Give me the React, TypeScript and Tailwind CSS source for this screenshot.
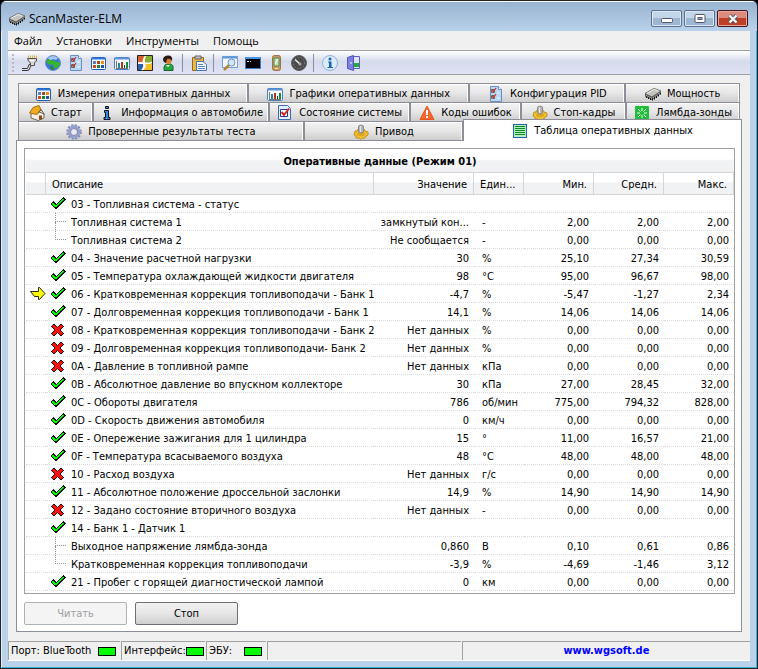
import React, { useState } from 'react';

type Row = {
  status?: 'ok' | 'error';
  child?: 'middle' | 'last';
  name: string;
  values?: [string, string, string, string, string];
};

const rows: Row[] = [
  { status: 'ok', name: '03 - Топливная система - статус' },
  { child: 'middle', name: 'Топливная система 1', values: ['замкнутый кон...', '-', '2,00', '2,00', '2,00'] },
  { child: 'last', name: 'Топливная система 2', values: ['Не сообщается', '-', '0,00', '0,00', '0,00'] },
  { status: 'ok', name: '04 - Значение расчетной нагрузки', values: ['30', '%', '25,10', '27,34', '30,59'] },
  { status: 'ok', name: '05 - Температура охлаждающей жидкости двигателя', values: ['98', '°C', '95,00', '96,67', '98,00'] },
  { status: 'ok', name: '06 - Кратковременная коррекция топливоподачи - Банк 1', values: ['-4,7', '%', '-5,47', '-1,27', '2,34'] },
  { status: 'ok', name: '07 - Долговременная коррекция топливоподачи - Банк 1', values: ['14,1', '%', '14,06', '14,06', '14,06'] },
  { status: 'error', name: '08 - Кратковременная коррекция топливоподачи - Банк 2', values: ['Нет данных', '%', '0,00', '0,00', '0,00'] },
  { status: 'error', name: '09 - Долговременная коррекция топливоподачи- Банк 2', values: ['Нет данных', '%', '0,00', '0,00', '0,00'] },
  { status: 'error', name: '0A - Давление в топливной рампе', values: ['Нет данных', 'кПа', '0,00', '0,00', '0,00'] },
  { status: 'ok', name: '0B - Абсолютное давление во впускном коллекторе', values: ['30', 'кПа', '27,00', '28,45', '32,00'] },
  { status: 'ok', name: '0C - Обороты двигателя', values: ['786', 'об/мин', '775,00', '794,32', '828,00'] },
  { status: 'ok', name: '0D - Скорость движения автомобиля', values: ['0', 'км/ч', '0,00', '0,00', '0,00'] },
  { status: 'ok', name: '0E - Опережение зажигания для 1 цилиндра', values: ['15', '°', '11,00', '16,57', '21,00'] },
  { status: 'ok', name: '0F - Температура всасываемого воздуха', values: ['48', '°C', '48,00', '48,00', '48,00'] },
  { status: 'error', name: '10 - Расход воздуха', values: ['Нет данных', 'г/с', '0,00', '0,00', '0,00'] },
  { status: 'ok', name: '11 - Абсолютное положение дроссельной заслонки', values: ['14,9', '%', '14,90', '14,90', '14,90'] },
  { status: 'error', name: '12 - Задано состояние вторичного воздуха', values: ['Нет данных', '-', '0,00', '0,00', '0,00'] },
  { status: 'ok', name: '14 - Банк 1 - Датчик 1' },
  { child: 'middle', name: 'Выходное напряжение лямбда-зонда', values: ['0,860', 'В', '0,10', '0,61', '0,86'] },
  { child: 'last', name: 'Кратковременная коррекция топливоподачи', values: ['-3,9', '%', '-4,69', '-1,46', '3,12'] },
  { status: 'ok', name: '21 - Пробег с горящей диагностической лампой', values: ['0', 'км', '0,00', '0,00', '0,00'] },
];

const Svg: React.FC<{ children: React.ReactNode }> = ({ children }) => (
  <svg viewBox="0 0 16 16" className="w-4 h-4 shrink-0" aria-hidden="true">
    {children}
  </svg>
);

const ChipIcon = () => (
  <Svg>
    <path d="M0 7L9 2L16 4.500V7.500L7 14L0 10.500Z" fill="#5a5a58" />
    <path d="M1.500 10v2M3.500 11v2M5.500 12v2M7.500 12v2.500M9.500 11v2.500M11.500 9.500v2.500M13.500 8v2.500M15.500 6.500v2" stroke="#111" />
    <path d="M0.500 7.500L9 2.500L15.500 5L7 10.500Z" fill="#c3c4be" />
    <path d="M2 7.500L9 3.500L13 5" stroke="#ecece8" fill="none" />
    <path d="M1 9.500L7 12.500L15.500 6.500" stroke="#d2d2cc" fill="none" strokeDasharray="1 1" />
  </Svg>
);

const PlugIcon = () => (
  <Svg>
    <path d="M0 14.500H5C8 14.500 6 10 9.500 9.500" stroke="#333" strokeWidth="2.800" fill="none" />
    <path d="M0 14.500H5C8 14.500 6 10 9.500 9.500" stroke="#e4e4e4" strokeWidth="1.200" fill="none" />
    <path d="M5.500 3.500H14.500V6L12.500 7.500V10.500H8.500V8L6.500 6Z" fill="#d9d9d4" stroke="#555" />
    <path d="M8 5.500H12" stroke="#fff" />
    <path d="M6.500 3V0.500M8.500 3V0.500M10.500 3V0.500M12.500 3V0.500M14.500 3V0.500" stroke="#d0b645" />
  </Svg>
);

const GlobeIcon = () => (
  <Svg>
    <circle cx="8" cy="8" r="7.500" fill="#3d74d6" stroke="#6c8fc6" />
    <path d="M3 3Q8 -1 13 3L11 5L8 4L5 6Z" fill="#a8c8f4" />
    <path d="M1 6L4 4L7 6L9 5L11 7L15 7L14 11L11 14L9 12L8 9L5 10L3 9Z" fill="#35b729" />
    <path d="M5 11L8 12L9 15L6 14Z" fill="#228c1c" />
  </Svg>
);

const ChecklistIcon = () => (
  <Svg>
    <path d="M2.500 0.500H10.500L13.500 3.500V15.500H2.500Z" fill="#bcd6f5" stroke="#6d8fc0" />
    <path d="M10.500 0.500V3.500H13.500" fill="#fff" stroke="#6d8fc0" />
    <path d="M3.500 3.500H6.500V6.500H3.500ZM3.500 9.500H6.500V12.500H3.500Z" fill="#ddd" stroke="#666" />
    <path d="M4 4L5.500 5.500L8 2M4 10L5.500 11.500L8 8" stroke="#c8321c" strokeWidth="1.200" fill="none" />
    <path d="M9 7H12M9 12H12" stroke="#f3f8ff" />
  </Svg>
);

const GridIcon = () => (
  <Svg>
    <rect x="0.500" y="2.500" width="14" height="12" rx="1" fill="#fff" stroke="#1d5bb8" />
    <path d="M1 3.500H14" stroke="#2f77d8" strokeWidth="2" />
    <path d="M2 6h3v3H2z" fill="#5b7fc4" />
    <path d="M6 6h3v3H6z" fill="#a04a25" />
    <path d="M10 6h3v3h-3z" fill="#f08c16" />
    <path d="M2 10h3v3H2z" fill="#d14624" />
    <path d="M6 10h3v3H6z" fill="#148c26" />
    <path d="M10 10h3v3h-3z" fill="#2450b2" />
  </Svg>
);

const ChartIcon = () => (
  <Svg>
    <rect x="0.500" y="2.500" width="15" height="12" rx="1" fill="#f6f9fd" stroke="#4a7fc1" />
    <path d="M1 3.500H15" stroke="#5d92d8" strokeWidth="2" />
    <path d="M2.500 6V13.500M2 13.500H14" stroke="#777" />
    <path d="M4 8h2v5H4z" fill="#1b8aa0" />
    <path d="M7 7h2v6H7z" fill="#b53416" />
    <path d="M10 10h1v3h-1z" fill="#333" />
    <path d="M12 7h2v6h-2z" fill="#158a35" />
  </Svg>
);

const WindowsIcon = () => (
  <Svg>
    <path d="M0.500 0.500H15.500V15.500H0.500Z" fill="#fff" stroke="#222" />
    <path d="M1 1H8Q5 4 6 8L1 7Z" fill="#d9612b" />
    <path d="M9 1H15V7L8 8Q7 4 9 1Z" fill="#83ad2c" />
    <path d="M1 9L6 9Q7 12 4 15H1Z" fill="#2f5fae" />
    <path d="M8 9L15 8V15H6Q9 12 8 9Z" fill="#f0be24" />
    <path d="M1 8.500Q6 6 9 8T15 7M8.500 1Q5 5 7.500 9T5 15" stroke="#fff" fill="none" />
  </Svg>
);

const UserIcon = () => (
  <Svg>
    <path d="M4 15.500V12Q5 8.500 8 9Q13 8.500 13 12V15.500Z" fill="#28a83c" stroke="#13661f" />
    <path d="M6 10L8 12L10 10" fill="#fff" />
    <circle cx="8.500" cy="6" r="3" fill="#d98236" />
    <path d="M3 4Q4 0 9 0.500Q13 1 12 6Q10 3 7 4L6 8Q3 7 3 4Z" fill="#2c1a14" />
  </Svg>
);

const PasteIcon = () => (
  <Svg>
    <path d="M1.500 2.500H12.500V15.500H1.500Z" fill="#e8b64c" stroke="#9a6a1b" />
    <path d="M4 1H10V4H4Z" fill="#b8bcc4" stroke="#666" />
    <path d="M5.500 6.500H12L15.500 9.500V15.500H5.500Z" fill="#eef5fd" stroke="#4674b0" />
    <path d="M7 9.500H12M7 11.500H14M7 13.500H14" stroke="#5e86be" />
  </Svg>
);

const SearchIcon = () => (
  <Svg>
    <rect x="0.500" y="1.500" width="15" height="11" fill="#f4f8fd" stroke="#76a0d3" />
    <path d="M1 2.500H15" stroke="#5b98df" strokeWidth="2" />
    <path d="M7 10L2 15" stroke="#b98734" strokeWidth="2.500" />
    <circle cx="9.500" cy="7.500" r="3.500" fill="#cfe9fa" stroke="#7793b0" />
  </Svg>
);

const ConsoleIcon = () => (
  <Svg>
    <path d="M0.500 2.500H15.500V13.500H0.500Z" fill="#050505" stroke="#377cc8" />
    <path d="M1 3H15" stroke="#4a94e4" strokeWidth="2" />
    <path d="M2 6.500H4M5 6.500H6" stroke="#ddd" fill="none" />
  </Svg>
);

const DeviceIcon = () => (
  <Svg>
    <rect x="4.500" y="0.500" width="8" height="15" rx="2" fill="#c99b5b" stroke="#9c7440" />
    <path d="M6 3H11V11H6Z" fill="#bfe2b4" stroke="#4d8a5a" />
    <path d="M7 9L10 4" stroke="#fff" />
    <path d="M7 13.500H10" stroke="#f3dfb8" />
  </Svg>
);

const GaugeIcon = () => (
  <Svg>
    <circle cx="8" cy="8" r="7.500" fill="#4a4a4a" stroke="#5c5c5c" />
    <circle cx="8" cy="8" r="5.500" fill="none" stroke="#8a8a8a" strokeDasharray="1 2" />
    <path d="M4 4.500L9 9" stroke="#eee" strokeWidth="1.500" />
    <circle cx="9" cy="9" r="1.500" fill="#aaa" />
  </Svg>
);

const InfoIcon = () => (
  <Svg>
    <circle cx="8" cy="8" r="7.500" fill="#dcebf9" stroke="#8fb0d6" />
    <circle cx="8" cy="4" r="1.500" fill="#1462b0" />
    <path d="M6 6.500H9.500V12H11V13H5.500V12H7V7.500H6Z" fill="#1462b0" />
  </Svg>
);

const ExitIcon = () => (
  <Svg>
    <path d="M7 1.500H14.500V13.500H7Z" fill="#dfe3fb" stroke="#5b5fc4" />
    <path d="M2.500 2.500L8.500 0.500V15.500L2.500 13.500Z" fill="#7b7fe0" stroke="#5357b5" />
    <path d="M9 8h5v4H9z" fill="#23a83a" />
    <path d="M6 7v2" stroke="#fff" />
  </Svg>
);

const HomeIcon = () => (
  <Svg>
    <path d="M2 9L8 6L15 9V13L9 15.500L2 13Z" fill="#f4efe2" stroke="#746955" />
    <path d="M10 10.500H13V14.500H10Z" fill="#8b4a1c" />
    <path d="M0.500 8L4 2.500L10 0.500L12 5L8 9.500Z" fill="#efab20" stroke="#a96d0d" />
    <path d="M8.500 8.500L12 4.500L15.500 9.500" stroke="#66563c" fill="none" />
  </Svg>
);

const LetterInfoIcon = () => (
  <Svg>
    <path d="M6.500 1.500H9.500V3.500H6.500Z" fill="#2c8bea" stroke="#111" />
    <path d="M5.500 5.500H9.500V12.500H11V14.500H5V12.500H6.500V7.500H5.500Z" fill="#2c8bea" stroke="#111" />
  </Svg>
);

const StateIcon = () => (
  <Svg>
    <path d="M1.500 0.500H10.500L13.500 3.500V14.500H1.500Z" fill="#e6f0fc" stroke="#3f6bb0" />
    <path d="M3.500 4.500H10.500V11.500H3.500Z" fill="#fff" stroke="#253a8a" />
    <path d="M4.500 7L7 10L12 3.500" stroke="#e02418" strokeWidth="2" fill="none" />
  </Svg>
);

const WarningIcon = () => (
  <Svg>
    <path d="M8 1L15 14.500H1Z" fill="#f4662a" stroke="#e4571f" strokeLinejoin="round" />
    <path d="M7 5H9V10H7ZM7 11H9V13H7Z" fill="#fff" />
  </Svg>
);

const ActuatorIcon = () => (
  <Svg>
    <path d="M2 7L4 7L5 5H11L12 7L15 8V11L13 12L12 14L9 14.500L8 15.500L6 14H3L3 12L1 11Z" fill="#efc132" stroke="#c0901d" />
    <ellipse cx="8" cy="10" rx="4" ry="2" fill="#dca61f" />
    <path d="M5.500 2Q8 0 10.500 2V8Q8 10 5.500 8Z" fill="#b5b5b5" stroke="#8c8c8c" />
    <path d="M7.500 2V8" stroke="#e8e8e8" />
  </Svg>
);

const LambdaIcon = () => (
  <Svg>
    <rect x="1" y="1" width="14" height="14" rx="1" fill="#23bd3c" />
    <path d="M8 3V6M8 10V13M3 8H6M10 8H13M4 4L6.500 6.500M12 4L9.500 6.500M4 12L6.500 9.500M12 12L9.500 9.500" stroke="#e6ffe9" />
  </Svg>
);

const GearIcon = () => (
  <Svg>
    <circle cx="8" cy="8" r="6.500" fill="none" stroke="#8088b4" strokeWidth="2.500" strokeDasharray="2 1.400" />
    <circle cx="8" cy="8" r="5" fill="none" stroke="#969ecb" strokeWidth="3" />
    <circle cx="8" cy="8" r="3.500" fill="#ececf0" stroke="#7a84ae" />
  </Svg>
);

const TableIcon = () => (
  <Svg>
    <rect x="1.500" y="1.500" width="13" height="13" fill="#b4efc0" stroke="#2263b5" />
    <path d="M3 3.500H13M3 5.500H13M3 7.500H13M3 9.500H13M3 11.500H13" stroke="#0a8a24" />
  </Svg>
);

const CheckIcon = () => (
  <Svg>
    <g shapeRendering="crispEdges">
      <path d="M0 8L3 5L6 8L13 1L15.500 3.500L6 13Z" fill="#111" />
      <path d="M1.500 8L3 6.500L6 9.500L13 2.500L14 3.500L6 11.800Z" fill="#00ff00" />
    </g>
  </Svg>
);

const CrossIcon = () => (
  <Svg>
    <g shapeRendering="crispEdges" fill="none">
      <path d="M2.500 3L12.500 13M12.500 3L2.500 13" stroke="#200808" strokeWidth="4" />
      <path d="M3 3.500L12 12.500M12 3.500L3 12.500" stroke="#ff1010" strokeWidth="2.200" />
    </g>
  </Svg>
);

const ArrowIcon = () => (
  <Svg>
    <path d="M0.500 5.500H8.500V1.500H9.500L15 7.500L9.500 13.500H8.500V10.500H4.500Z" fill="#ffff00" stroke="#222" />
  </Svg>
);

const toolGroups = [
  [
    { label: 'Подключение', Icon: PlugIcon },
    { label: 'Интернет', Icon: GlobeIcon },
    { label: 'Конфигурация PID', Icon: ChecklistIcon },
    { label: 'Измерения', Icon: GridIcon },
    { label: 'Графики', Icon: ChartIcon },
    { label: 'Windows', Icon: WindowsIcon },
    { label: 'Пользователь', Icon: UserIcon },
  ],
  [{ label: 'Буфер обмена', Icon: PasteIcon }],
  [
    { label: 'Поиск', Icon: SearchIcon },
    { label: 'Терминал', Icon: ConsoleIcon },
    { label: 'Устройство', Icon: DeviceIcon },
    { label: 'Приборы', Icon: GaugeIcon },
  ],
  [
    { label: 'О программе', Icon: InfoIcon },
    { label: 'Выход', Icon: ExitIcon },
  ],
];

const tabRows = [
  [
    { label: 'Измерения оперативных данных', Icon: GridIcon, size: 'flex-[231]' },
    { label: 'Графики оперативных данных', Icon: ChartIcon, size: 'flex-[222]' },
    { label: 'Конфигурация PID', Icon: ChecklistIcon, size: 'flex-[156]' },
    { label: 'Мощность', Icon: ChipIcon, size: 'flex-[114]' },
  ],
  [
    { label: 'Старт', Icon: HomeIcon, size: 'flex-[74]' },
    { label: 'Информация о автомобиле', Icon: LetterInfoIcon, size: 'flex-[178]' },
    { label: 'Состояние системы', Icon: StateIcon, size: 'flex-[141]' },
    { label: 'Коды ошибок', Icon: WarningIcon, size: 'flex-[111]' },
    { label: 'Стоп-кадры', Icon: ActuatorIcon, size: 'flex-[105]' },
    { label: 'Лямбда-зонды', Icon: LambdaIcon, size: 'flex-[114]' },
  ],
  [
    { label: 'Проверенные результаты теста', Icon: GearIcon, size: 'flex-[287]' },
    { label: 'Привод', Icon: ActuatorIcon, size: 'flex-[159]' },
  ],
];

const columns = [
  { label: '', cell: 'w-5' },
  { label: 'Описание', cell: 'pl-1.5 text-left' },
  { label: 'Значение', cell: 'w-[100px] pr-1.5 text-right' },
  { label: 'Един...', cell: 'w-[50px] pl-1.5 text-left' },
  { label: 'Мин.', cell: 'w-[70px] pr-1.5 text-right' },
  { label: 'Средн.', cell: 'w-[70px] pr-1.5 text-right' },
  { label: 'Макс.', cell: 'w-[70px] pr-1.5 text-right' },
];

const Led = () => <span className="w-[18px] h-[9px] shrink-0 bg-[#00ff00] border border-black" />;

const TitleBar = () => (
  <header className="h-[30px] flex items-center pt-1 pl-2 pr-[9px] bg-linear-to-b from-[#99b4d1] to-[#b9d1ea] border-t border-white">
    <ChipIcon />
    <h1 className="ml-1 grow font-['Open_Sans','Noto_Sans',sans-serif] text-xs">ScanMaster-ELM</h1>
    <div className="flex gap-0.5">
      <button
        aria-label="Свернуть"
        className="w-[31px] h-[17px] flex items-center justify-center rounded-xs border border-[#5c6f8c] ring-1 ring-inset ring-[#dbe7f3] bg-linear-to-b from-[#c3d5e9] from-50% to-[#9db7d3] to-50%"
      >
        <svg viewBox="0 0 12 6" className="w-3 h-1.5 mt-1" aria-hidden="true">
          <rect x="0.500" y="0.500" width="11" height="4" rx="1" fill="#fff" stroke="#535666" />
        </svg>
      </button>
      <button
        aria-label="Развернуть"
        className="w-[31px] h-[17px] flex items-center justify-center rounded-xs border border-[#5c6f8c] ring-1 ring-inset ring-[#dbe7f3] bg-linear-to-b from-[#c3d5e9] from-50% to-[#9db7d3] to-50%"
      >
        <svg viewBox="0 0 12 10" className="w-3 h-2.5" aria-hidden="true">
          <rect x="1" y="0.500" width="10" height="8" rx="1" fill="#fff" stroke="#535666" />
          <rect x="4" y="3.500" width="4" height="2" fill="#8aa9c9" stroke="#535666" />
        </svg>
      </button>
      <button
        aria-label="Закрыть"
        className="w-[31px] h-[17px] flex items-center justify-center rounded-xs border border-[#431422] ring-1 ring-inset ring-[#e8a99c] bg-linear-to-b from-[#dc8c7c] from-50% to-[#bd3f25] to-50%"
      >
        <svg viewBox="0 0 12 10" className="w-3 h-2.5" aria-hidden="true">
          <path d="M2.500 1.500L9.500 8.500M9.500 1.500L2.500 8.500" stroke="#535666" strokeWidth="4" />
          <path d="M2.500 1.500L9.500 8.500M9.500 1.500L2.500 8.500" stroke="#fff" strokeWidth="2.200" />
        </svg>
      </button>
    </div>
  </header>
);

const Toolbar = () => (
  <div
    role="toolbar"
    className="h-[25px] flex items-center pl-1 border-y border-[#a0a0a0] bg-linear-to-b from-white via-[#d6dbec] via-45% to-[#dfe2f4]"
  >
    <span className="w-0.5 h-[18px] mr-1 border-l-2 border-dotted border-[#b5b9c8]" />
    {toolGroups.map((group, i) => (
      <div key={i} className="flex items-center">
        {i > 0 && <span className="w-px h-[18px] ml-[3px] mr-1 bg-[#8e8f9c]" />}
        {group.map(({ label, Icon }) => (
          <button key={label} aria-label={label} className="w-[23px] h-[22px] flex items-center justify-center">
            <Icon />
          </button>
        ))}
      </div>
    ))}
  </div>
);

export default function App() {
  const [running, setRunning] = useState(true);
  const currentRow = 5;

  return (
    <div className="min-h-screen bg-black font-['DejaVu_Sans_Condensed','Noto_Sans',sans-serif] text-[11px] leading-[14px] text-black">
      <div className="min-h-screen flex flex-col rounded-t-md overflow-hidden border border-[#1f2329]">
        <TitleBar />
        <div className="grow flex flex-col bg-[#bad1ea] border border-t-0 border-[#35b6d6] border-l-[#e4eef8] px-1.5 pb-1.5">
          <div className="grow flex flex-col bg-[#f0f0f0]">
            <nav className="h-[19px] flex items-center gap-3.5 pl-1.5 font-['Open_Sans','Noto_Sans',sans-serif]">
              <button>Файл</button>
              <button>Установки</button>
              <button>Инструменты</button>
              <button>Помощь</button>
            </nav>
            <Toolbar />

            <main className="grow flex flex-col px-2 pt-2">
              <div role="tablist" className="px-0.5">
                {tabRows.map((tabs, i) => (
                  <div key={i} className="flex">
                    {tabs.map(({ label, Icon, size }) => (
                      <button
                        key={label}
                        role="tab"
                        aria-selected={false}
                        className={`${size} min-w-0 h-[19px] pt-0.5 flex items-center justify-center gap-1.5 whitespace-nowrap overflow-hidden border border-b-0 border-[#8c8e98] shadow-[inset_-1px_1px_0_#ffffff] bg-linear-to-b from-[#f3f3f3] via-[#e6e6e6] via-50% to-[#cdcdcd]`}
                      >
                        <Icon />
                        {label}
                      </button>
                    ))}
                    {i === 2 && (
                      <button
                        role="tab"
                        aria-selected
                        className="flex-[280] min-w-0 relative z-10 h-[22px] -mt-0.5 -mb-px -mr-0.5 flex items-center justify-center gap-1.5 whitespace-nowrap bg-white border border-b-0 border-[#8c8e98]"
                      >
                        <TableIcon />
                        {'Таблица оперативных данных'}
                      </button>
                    )}
                  </div>
                ))}
              </div>

              <section className="grow bg-white border border-[#8c8e98] pl-[7px] pr-1.5 pt-[7px] pb-1.5">
                <div className="border border-[#a0a0a0] pt-px pl-px pb-0.5">
                  <h2 className="h-[23px] flex items-center justify-center pt-0.5 font-bold border-b border-[#d5d5d5] bg-linear-to-b from-white from-40% to-[#f1f2f4] to-50%">
                    Оперативные данные (Режим 01)
                  </h2>
                  <table className="w-full table-fixed border-separate border-spacing-0">
                    <thead>
                      <tr>
                        {columns.map((col, i) => (
                          <th
                            key={i}
                            scope="col"
                            className={`${col.cell} h-[22px] pt-0.5 pb-0 font-normal whitespace-nowrap border-b border-r border-[#d5d5d5] bg-linear-to-b from-white from-40% to-[#f1f2f4] to-50%`}
                          >
                            {col.label}
                          </th>
                        ))}
                      </tr>
                    </thead>
                    <tbody className="[&_td]:h-[18px] [&_td]:p-0 [&_td]:whitespace-nowrap [&_td]:border-b [&_td]:border-dotted [&_td]:border-[#dcdcdc]">
                      {rows.map((row, i) => (
                        <tr key={i}>
                          <td>
                            {i === currentRow && (
                              <div className="flex justify-end">
                                <ArrowIcon />
                              </div>
                            )}
                          </td>
                          <td>
                            <div className="h-[17px] flex items-center gap-[5px] pl-1">
                              {row.status === 'ok' && <CheckIcon />}
                              {row.status === 'error' && <CrossIcon />}
                              {row.child && (
                                <span className="w-4 self-stretch pl-[5px] flex flex-col">
                                  <span className="h-[9px] border-l border-b border-dotted border-[#909090]" />
                                  {row.child === 'middle' && (
                                    <span className="grow border-l border-dotted border-[#909090]" />
                                  )}
                                </span>
                              )}
                              <span className="pt-0.5">{row.name}</span>
                            </div>
                          </td>
                          {(row.values || ['', '', '', '', '']).map((value, j) => (
                            <td key={j}>
                              <div className={j === 1 ? 'pt-0.5 pl-2' : 'pt-0.5 pr-[5px] text-right'}>{value}</div>
                            </td>
                          ))}
                        </tr>
                      ))}
                    </tbody>
                  </table>
                </div>
                <div className="flex gap-2 pt-2">
                  <button
                    disabled={running}
                    onClick={() => setRunning(true)}
                    className="w-[103px] h-[23px] rounded-xs border border-[#707070] bg-linear-to-b from-[#f2f2f2] via-[#e6e6e6] via-50% to-[#cfcfcf] disabled:border-[#adb2b5] disabled:bg-none disabled:bg-[#f4f4f4] disabled:text-[#a0a0a0]"
                  >
                    Читать
                  </button>
                  <button
                    disabled={!running}
                    onClick={() => setRunning(false)}
                    className="w-[103px] h-[23px] rounded-xs border border-[#707070] bg-linear-to-b from-[#f2f2f2] via-[#e6e6e6] via-50% to-[#cfcfcf] disabled:border-[#adb2b5] disabled:bg-none disabled:bg-[#f4f4f4] disabled:text-[#a0a0a0]"
                  >
                    Стоп
                  </button>
                </div>
              </section>
            </main>

            <footer className="mt-[9px] h-5 flex gap-px border-b border-white [&>div]:h-[19px] [&>div]:flex [&>div]:items-center [&>div]:whitespace-nowrap [&>div]:border-t [&>div]:border-l [&>div]:border-[#a0a0a0]">
              <div className="w-28 justify-between pl-0.5 pr-1">
                Порт: BlueTooth <Led />
              </div>
              <div className="w-[84px] justify-between pl-0.5 pr-1">
                Интерфейс: <Led />
              </div>
              <div className="w-[60px] justify-between pl-0.5 pr-1">
                ЭБУ: <Led />
              </div>
              <div className="flex-[194]" />
              <div className="flex-[289] justify-center">
                <a href="http://www.wgsoft.de" className="font-bold text-[#0000ff]">
                  www.wgsoft.de
                </a>
              </div>
            </footer>
          </div>
        </div>
      </div>
    </div>
  );
}
